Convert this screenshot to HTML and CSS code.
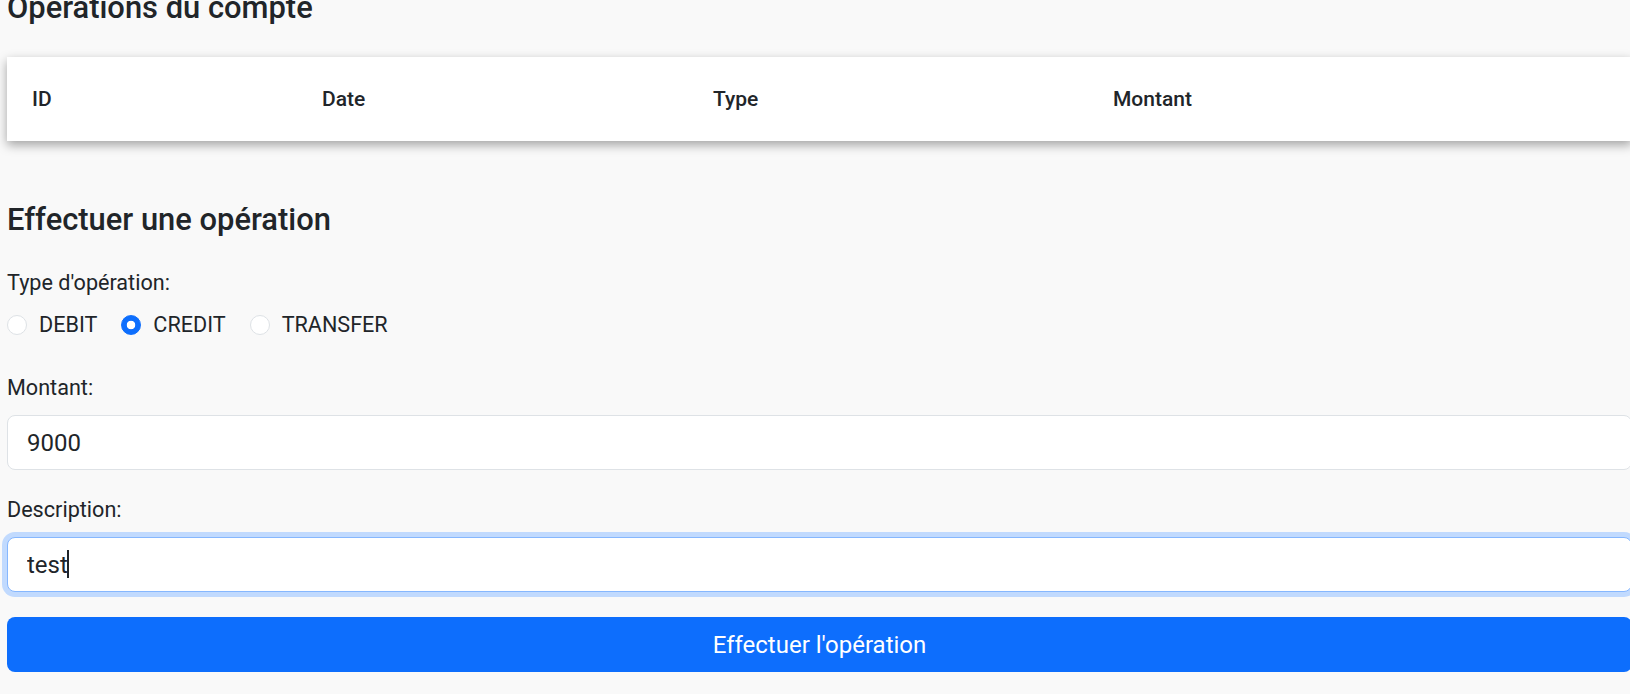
FILE: index.html
```html
<!DOCTYPE html>
<html lang="fr">
<head>
<meta charset="utf-8">
<title>Opérations du compte</title>
<link rel="stylesheet" href="styles.css">
</head>
<body>
<main class="page">
  <h2 class="title title-top">Opérations du compte</h2>
  <div class="card">
    <table class="ops">
      <thead>
        <tr>
          <th class="c-id">ID</th>
          <th class="c-date">Date</th>
          <th class="c-type">Type</th>
          <th class="c-amount">Montant</th>
        </tr>
      </thead>
      <tbody></tbody>
    </table>
  </div>

  <h2 class="title title-form">Effectuer une opération</h2>
  <form class="op-form">
    <div class="field">
      <span class="label">Type d'opération:</span>
      <div class="radios">
        <label class="radio"><input type="radio" name="type" value="DEBIT"><span>DEBIT</span></label>
        <label class="radio"><input type="radio" name="type" value="CREDIT" checked><span>CREDIT</span></label>
        <label class="radio"><input type="radio" name="type" value="TRANSFER"><span>TRANSFER</span></label>
      </div>
    </div>
    <div class="field">
      <label class="label" for="amount">Montant:</label>
      <input class="control" id="amount" type="text" value="9000">
    </div>
    <div class="field">
      <label class="label" for="desc">Description:</label>
      <div class="control-wrap">
        <input class="control focused" id="desc" type="text" value="test">
        <span class="caret"></span>
      </div>
    </div>
    <button type="button" class="btn">Effectuer l'opération</button>
  </form>
</main>
</body>
</html>
```

FILE: styles.css
```css
html, body {
  margin: 0;
  padding: 0;
  background: #f9f9f9;
  overflow: hidden;
}
body {
  font-family: Roboto, "Liberation Sans", sans-serif;
  color: #212529;
}
.page {
  width: 1625px;
  padding-left: 7px;
}
.title {
  font-size: 30.9px;
  font-weight: 500;
  line-height: 1.2;
  margin: 0;
}
.title-top {
  margin-top: -11px;
}
.card {
  margin-top: 31px;
  background: #fff;
  box-shadow: 0 4px 10px rgba(0, 0, 0, 0.35);
}
.ops {
  width: 100%;
  border-collapse: collapse;
  table-layout: fixed;
}
.ops th {
  text-align: left;
  font-size: 21px;
  font-weight: 500;
  line-height: 24px;
  padding: 30px 0 30px 25px;
}
.c-id { width: 265px; }
.c-date { width: 366px; }
.c-type { width: 375px; }
.title-form {
  margin-top: 60px;
}
.op-form {
  display: flex;
  flex-direction: column;
}
.field {
  display: flex;
  flex-direction: column;
}
.label {
  font-size: 21.6px;
  line-height: 31px;
}
.field:first-child {
  margin-top: 29px;
}
.radios {
  display: flex;
  align-items: center;
  gap: 24px;
  margin-top: 11px;
}
.radio {
  display: flex;
  align-items: center;
  gap: 12px;
  font-size: 21.6px;
  line-height: 31px;
}
.radio input {
  appearance: none;
  -webkit-appearance: none;
  margin: 0;
  width: 20px;
  height: 20px;
  border-radius: 50%;
  border: 1px solid #dee2e6;
  background: #fff;
  box-sizing: border-box;
}
.radio input:checked {
  border-color: #0d6efd;
  background: radial-gradient(circle, #fff 0 4px, #0d6efd 4.6px);
}
.field + .field {
  margin-top: 32px;
}
.field + .field + .field {
  margin-top: 24px;
}
.field .label + .control,
.field .label + .control-wrap {
  margin-top: 12px;
}
.control-wrap {
  position: relative;
}
.control {
  box-sizing: border-box;
  width: 100%;
  height: 55px;
  padding: 0 19px;
  border: 1px solid #dee2e6;
  border-radius: 8px;
  background: #fff;
  font-family: Roboto, "Liberation Sans", sans-serif;
  font-size: 24px;
  color: #212529;
  outline: none;
}
.control.focused {
  border-color: #86b7fe;
  box-shadow: 0 0 0 5px #c1dafe;
}
.caret {
  position: absolute;
  left: 60px;
  top: 13px;
  width: 2px;
  height: 28px;
  background: #212529;
}
.btn {
  margin-top: 25px;
  height: 55px;
  border: none;
  border-radius: 8px;
  background: #0d6efd;
  color: #fff;
  font-family: Roboto, "Liberation Sans", sans-serif;
  font-size: 24px;
}
```
